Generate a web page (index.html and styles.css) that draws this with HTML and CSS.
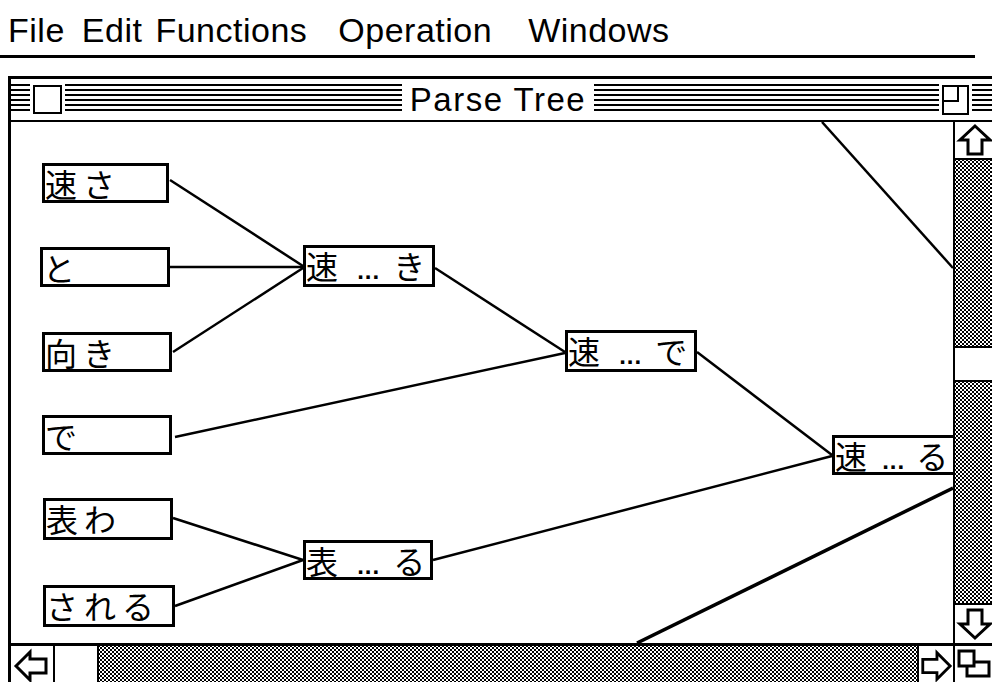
FILE: index.html
```html
<!DOCTYPE html>
<html lang="ja">
<head>
    <meta charset="UTF-8">
    <title>Parse Tree</title>
    <link rel="stylesheet" href="styles.css">
</head>
<body>
    <!-- Menu bar -->
    <div class="menubar">
        <span>File</span>
        <span>Edit</span>
        <span>Functions</span>
        <span>Operation</span>
        <span>Windows</span>
    </div>

    <!-- Parse tree window -->
    <div class="window">
        <div class="titlebar">
            <div class="close-box"></div>
            <div class="title"><span>Parse Tree</span></div>
            <div class="zoom-box"><div class="zoom-inner"></div></div>
        </div>

        <div class="canvas">
            <svg class="links" width="942" height="521" viewBox="0 0 942 521">
                <g stroke="#000" stroke-width="2.5" fill="none">
                    <line x1="159" y1="58" x2="292" y2="144"/>
                    <line x1="159" y1="145" x2="292" y2="145"/>
                    <line x1="162" y1="230" x2="292" y2="146"/>
                    <line x1="424" y1="146" x2="554" y2="230"/>
                    <line x1="164" y1="315" x2="554" y2="231"/>
                    <line x1="686" y1="230" x2="821" y2="333"/>
                    <line x1="162" y1="396" x2="292" y2="438"/>
                    <line x1="164" y1="484" x2="292" y2="438"/>
                    <line x1="422" y1="438" x2="821" y2="334"/>
                    <line x1="811" y1="0" x2="942" y2="146"/>
                    <line x1="626" y1="521" x2="942" y2="366" stroke-width="3.5"/>
                </g>
            </svg>

            <div class="node n1">速さ</div>
            <div class="node n2">と</div>
            <div class="node n3">向き</div>
            <div class="node n4">で</div>
            <div class="node n5">表わ</div>
            <div class="node n6">される</div>
            <div class="node n7">速 <span class="dots">...</span> き</div>
            <div class="node n8">速 <span class="dots">...</span> で</div>
            <div class="node n9">速 <span class="dots">...</span> る</div>
            <div class="node n10">表 <span class="dots">...</span> る</div>
        </div>

        <!-- Vertical scroll bar -->
        <div class="vscroll">
            <div class="arrow-box arrow-up">
                <svg width="38" height="36" viewBox="0 0 38 36">
                    <path d="M19 4 L34 18 L26 18 L26 32 L12 32 L12 18 L4 18 Z" fill="#fff" stroke="#000" stroke-width="3"/>
                </svg>
            </div>
            <div class="track"></div>
            <div class="thumb-v"></div>
            <div class="track track-long"></div>
            <div class="arrow-box arrow-down">
                <svg width="38" height="36" viewBox="0 0 38 36">
                    <path d="M19 32 L34 18 L26 18 L26 4 L12 4 L12 18 L4 18 Z" fill="#fff" stroke="#000" stroke-width="3"/>
                </svg>
            </div>
        </div>

        <!-- Horizontal scroll bar -->
        <div class="hscroll">
            <div class="arrow-box arrow-left">
                <svg width="38" height="38" viewBox="0 0 38 38">
                    <path d="M3 19 L17 5 L17 12 L33 12 L33 26 L17 26 L17 33 Z" fill="#fff" stroke="#000" stroke-width="3"/>
                </svg>
            </div>
            <div class="thumb-h"></div>
            <div class="track"></div>
            <div class="arrow-box arrow-right">
                <svg width="36" height="38" viewBox="0 0 36 38">
                    <path d="M33 19 L19 5 L19 12 L4 12 L4 26 L19 26 L19 33 Z" fill="#fff" stroke="#000" stroke-width="3"/>
                </svg>
            </div>
        </div>

        <div class="grow-box">
            <svg width="40" height="39" viewBox="0 0 40 39">
                <g fill="none" stroke="#000" stroke-width="3">
                    <path d="M12 16 L12 30 L34 30 L34 16 L20 16"/>
                    <rect x="4" y="5" width="15" height="15" fill="#fff"/>
                </g>
            </svg>
        </div>
    </div>
</body>
</html>
```

FILE: styles.css
```css
* {
    box-sizing: border-box;
}

html, body {
    margin: 0;
    padding: 0;
    width: 992px;
    height: 682px;
    overflow: hidden;
    background: #fff;
    color: #000;
    font-family: "Liberation Sans", Arial, sans-serif;
}

/* Menu bar */
.menubar {
    width: 975px;
    height: 58px;
    padding: 12px 0 0 8px;
    border-bottom: 3px solid #000;
    display: flex;
    font-size: 34px;
    line-height: 36px;
    letter-spacing: 0.5px;
}

.menubar span:nth-child(2) { margin-left: 17px; }
.menubar span:nth-child(3) { margin-left: 13px; }
.menubar span:nth-child(4) { margin-left: 31px; }
.menubar span:nth-child(5) { margin-left: 36px; }

/* Window frame */
.window {
    margin: 18px 0 0 8px;
    width: 990px;
    border: 3px solid #000;
    display: grid;
    grid-template-columns: 942px 42px;
    grid-template-rows: 43px 521px 42px;
}

.titlebar {
    grid-column: 1 / -1;
    display: flex;
    align-items: center;
    border-bottom: 2px solid #000;
    background-image: repeating-linear-gradient(to bottom, #000 0 2px, #fff 2px 5px);
    background-size: 100% 29px;
    background-position: 0 5px;
    background-repeat: no-repeat;
    padding-left: 22px;
}

.close-box {
    width: 29px;
    height: 29px;
    border: 2px solid #000;
    background: #fff;
    box-shadow: 0 0 0 3px #fff;
}

.title {
    flex: 1;
    text-align: center;
    font-size: 33px;
    line-height: 36px;
    letter-spacing: 1.5px;
    padding-right: 8px;
}

.title span {
    background: #fff;
    padding: 0 8px;
}

.zoom-box {
    width: 27px;
    height: 30px;
    margin-right: 26px;
    border: 2px solid #000;
    background: #fff;
    box-shadow: 0 0 0 3px #fff;
    position: relative;
}

.zoom-inner {
    position: absolute;
    left: 0;
    top: 0;
    width: 15px;
    height: 15px;
    border-right: 2px solid #000;
    border-bottom: 2px solid #000;
}

/* Canvas with the tree */
.canvas {
    position: relative;
    overflow: hidden;
    background: #fff;
}

.links {
    position: absolute;
    left: 0;
    top: 0;
}

.node {
    position: absolute;
    width: 130px;
    height: 40px;
    border: 3px solid #000;
    background: #fff;
    font-family: "Noto Sans CJK JP", sans-serif;
    font-size: 32px;
    line-height: 34px;
    letter-spacing: 6px;
    white-space: nowrap;
}

.node .dots {
    font-family: "Liberation Sans", Arial, sans-serif;
    font-size: 24px;
    font-weight: bold;
    letter-spacing: 1px;
}

.n1 { left: 31px; top: 41px; width: 127px; }
.n2 { left: 29px; top: 125px; }
.n3 { left: 31px; top: 210px; }
.n4 { left: 31px; top: 293px; }
.n5 { left: 32px; top: 376px; height: 42px; }
.n6 { left: 32px; top: 463px; width: 132px; height: 42px; }
.n7 { left: 292px; top: 123px; width: 132px; height: 42px; }
.n8 { left: 554px; top: 208px; width: 132px; height: 42px; }
.n9 { left: 821px; top: 313px; width: 124px; letter-spacing: 4px; }
.n10 { left: 292px; top: 418px; }

/* Scroll bars */
.vscroll {
    border-left: 2px solid #000;
    display: flex;
    flex-direction: column;
}

.track {
    flex: 1;
    background-color: #fff;
    background-image:
        radial-gradient(circle, #000 0.8px, transparent 1.2px),
        radial-gradient(circle, #000 0.8px, transparent 1.2px);
    background-size: 4px 4px, 4px 4px;
    background-position: 0 0, 2px 2px;
}

.vscroll .track {
    flex: none;
    height: 186px;
}

.vscroll .track-long {
    height: 221px;
}

.thumb-v {
    height: 36px;
    background: #fff;
    border-top: 2px solid #000;
    border-bottom: 2px solid #000;
}

.arrow-box {
    display: flex;
    align-items: center;
    justify-content: center;
    background: #fff;
}

.arrow-up {
    height: 38px;
    border-bottom: 2px solid #000;
}

.arrow-down {
    height: 40px;
    border-top: 2px solid #000;
}

.hscroll {
    border-top: 3px solid #000;
    display: flex;
}

.arrow-left {
    width: 44px;
    border-right: 2px solid #000;
}

.thumb-h {
    width: 44px;
    background: #fff;
    border-right: 2px solid #000;
}

.arrow-right {
    width: 36px;
    border-left: 2px solid #000;
}

.grow-box {
    border-top: 3px solid #000;
    border-left: 2px solid #000;
    background: #fff;
}
```
